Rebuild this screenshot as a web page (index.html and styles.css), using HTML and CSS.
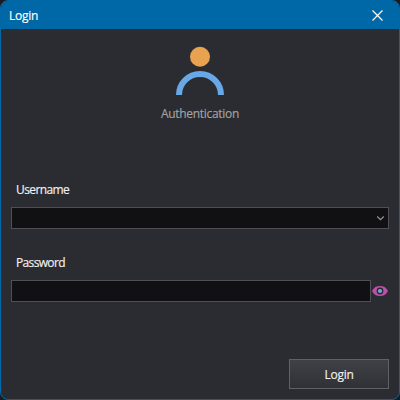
FILE: index.html
```
<!DOCTYPE html>
<html lang="en">
<head>
<meta charset="utf-8">
<title>Login</title>
<link rel="stylesheet" href="styles.css">
</head>
<body>
<div class="window">
  <header class="titlebar">
    <span class="title">Login</span>
    <svg class="close" width="11" height="11" viewBox="0 0 11 11"><path d="M.5.5l10 10M10.500.5l-10 10"/></svg>
  </header>
  <main class="content">
    <section class="hero">
      <svg class="user" width="48" height="48" viewBox="0 0 48 48">
        <circle cx="24" cy="9.700" r="10"/>
        <path d="M3 48a21 21 0 0 1 42 0"/>
      </svg>
      <span class="caption">Authentication</span>
    </section>
    <div class="field">
      <span class="label username">Username</span>
      <div class="input">
        <svg class="chevron" width="9" height="6" viewBox="0 0 9 6"><path d="M1.200 1.500l3.300 3.200L7.800 1.500"/></svg>
      </div>
    </div>
    <div class="field">
      <span class="label password">Password</span>
      <div class="row">
        <div class="input"></div>
        <svg class="eye" width="18" height="12" viewBox="0 0 18 12">
          <path fill="#c14fa8" d="M1 6C2.800 2.300 5.600 1 9 1s6.200 1.300 8 5c-1.800 3.700-4.600 5-8 5S2.800 9.700 1 6z"/>
          <circle cx="9" cy="6" r="3.400" fill="#2b2c31"/>
          <circle cx="9" cy="6" r="2.100" fill="#69a8e6"/>
        </svg>
      </div>
    </div>
    <button class="submit">Login</button>
  </main>
</div>
</body>
</html>
```
FILE: styles.css
```
* { box-sizing: border-box; }
body {
  margin: 0;
  background: #1c1c20;
  font: 12px/16px "Open Sans", "Noto Sans", sans-serif;
  color: #f1f1f1;
  -webkit-text-stroke: 0.15px;
}
svg { display: block; flex: none; overflow: visible; }
.window {
  width: 400px;
  height: 400px;
  border: 1px solid #0068a6;
  border-radius: 8px;
  background: #2b2c31;
  overflow: hidden;
}
.titlebar {
  display: flex;
  align-items: center;
  justify-content: space-between;
  height: 28px;
  padding: 0 16.5px 0 8px;
  background: #0068a6;
  color: #fff;
}
.title { padding-top: 2px; letter-spacing: -0.25px; }
.close { fill: none; stroke: #fff; stroke-width: 1.2; }
.content {
  display: flex;
  flex-direction: column;
  padding: 18px 10px 10px;
}
.hero {
  display: flex;
  flex-direction: column;
  align-items: center;
  height: 135px;
}
.user circle { fill: #e8a250; }
.user path { fill: none; stroke: #69a8e6; stroke-width: 6; }
.caption { margin-top: 11px; color: #a3a3a3; letter-spacing: -0.3px; }
.field { height: 73px; }
.label { display: block; height: 25px; padding-left: 5px; }
.username { letter-spacing: -0.6px; }
.password { letter-spacing: -0.65px; }
.input {
  display: flex;
  flex: 1;
  align-items: center;
  justify-content: flex-end;
  height: 22px;
  padding-right: 3px;
  border: 1px solid #504f57;
  background: #111113;
}
.row { display: flex; align-items: center; }
.chevron { fill: none; stroke: #929292; stroke-width: 1.3; }
.submit {
  align-self: flex-end;
  width: 100px;
  height: 30px;
  margin-top: 31px;
  padding: 2px 0 0;
  border: 1px solid #606066;
  background: linear-gradient(#404146, #303136);
  color: #f1f1f1;
  font: inherit;
  letter-spacing: -0.25px;
}
```
